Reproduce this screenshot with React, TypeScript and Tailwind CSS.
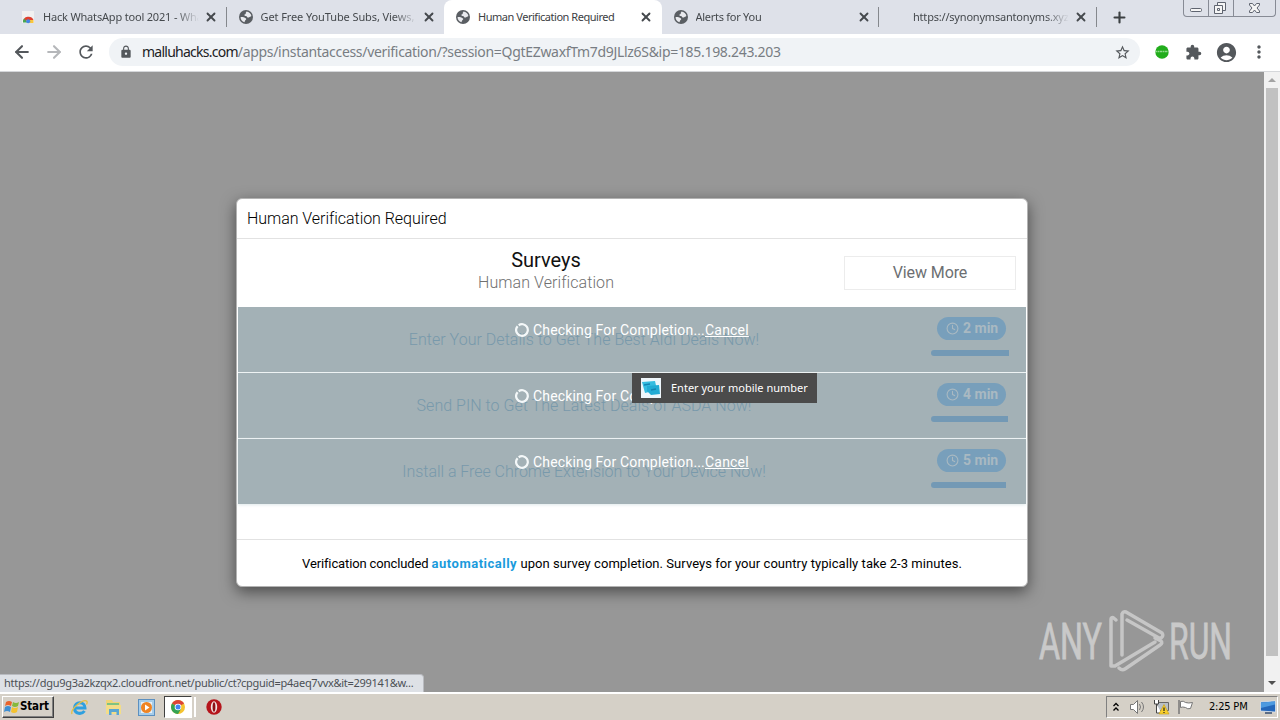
import { ArrowLeft, ArrowRight, Clock, Plus, X } from "lucide-react";
import { MdAccountCircle, MdExtension, MdLock, MdMoreVert, MdRefresh, MdStarBorder } from "react-icons/md";

const tabs = [
  { title: "Hack WhatsApp tool 2021 - Wha", icon: "store", ls: "tracking-[-0.180px]" },
  { title: "Get Free YouTube Subs, Views,", icon: "globe", ls: "tracking-[-0.100px]" },
  { title: "Human Verification Required", icon: "globe", active: true, ls: "tracking-[-0.470px]" },
  { title: "Alerts for You", icon: "globe", ls: "tracking-[-0.270px]" },
  { title: "https://synonymsantonyms.xyz", icon: "none", ls: "tracking-[-0.200px]" },
];

const surveys = [
  { title: "Enter Your Details to Get The Best Aldi Deals Now!", time: "2 min", bar: 78 },
  { title: "Send PIN to Get The Latest Deals of ASDA Now!", time: "4 min", bar: 77 },
  { title: "Install a Free Chrome Extension to Your Device Now!", time: "5 min", bar: 75 },
];

function StoreIcon() {
  return (
    <svg width="14" height="14" viewBox="0 0 14 14">
      <path d="M1 1h12v12H1z" fill="#f1f1f1" />
      <path d="M2 12a5.500 5.500 0 0 1 10.500-2H7z" fill="#e0402f" />
      <path d="M2 12.500a5 5 0 0 1 1-4l4 4z" fill="#45a853" />
      <path d="M7 10h5.500v3H6z" fill="#f9c63d" />
      <circle cx="7.200" cy="11.200" r="2" fill="#4384e8" />
    </svg>
  );
}

function GlobeIcon() {
  return (
    <svg width="14" height="14" viewBox="0 0 14 14">
      <circle cx="7" cy="7" r="7" fill="#5a5e63" />
      <path d="M7.500 1.500c2.500.3 4.500 2 4.900 4.500-.8.8-1.900.6-2.400 1.500-1.500.3-2.500-.5-2.500-1.500C6 6 5 5.500 5.500 4.500c1-.3 1.500-.8 1.200-1.600z" fill="#e9eaee" />
      <path d="M1.600 7c1.500-.3 3.500 0 4.500 1 .8 0 1.400.8 1 1.600-.9.4-1.100 1.300-1.600 2.600C3 11.500 1.400 9.500 1.600 7z" fill="#e9eaee" />
    </svg>
  );
}

function ChromeIcon() {
  return (
    <svg width="14" height="14" viewBox="0 0 14 14">
      <circle cx="7" cy="7" r="7" fill="#f5c330" />
      <path d="M7 7 .94 3.500A7 7 0 0 1 13.060 3.500z" fill="#dc4437" />
      <path d="M7 7 .94 3.500A7 7 0 0 0 7 14l3-5z" fill="#35a353" />
      <circle cx="7" cy="7" r="3.300" fill="#fff" />
      <circle cx="7" cy="7" r="2.500" fill="#4285f4" />
    </svg>
  );
}

function Tab({ tab }: { tab: (typeof tabs)[number] }) {
  return (
    <div className={`flex h-[34px] w-[217.500px] shrink-0 items-center pl-[12px] ${tab.active ? "rounded-t-lg bg-white" : ""}`}>
      <span className="w-[15px]">
        {tab.icon === "store" && <StoreIcon />}
        {tab.icon === "globe" && <GlobeIcon />}
      </span>
      <span
        className={`ml-[7px] w-[156px] overflow-hidden text-[11px] whitespace-nowrap ${tab.ls} ${tab.active ? "text-[#3c4043]" : "text-[#45494d] [mask-image:linear-gradient(to_right,black_85%,transparent)]"}`}
      >
        {tab.title}
      </span>
      <X className="ml-[5px] size-[14px] text-[#45494d]" strokeWidth={3.2} />
    </div>
  );
}

function TabStrip() {
  return (
    <div className="flex h-[34px] items-center bg-[#dee1e9] pl-[9px]">
      <Tab tab={tabs[0]} />
      <div className="-ml-px h-5 w-px bg-[#85888d]" />
      <Tab tab={tabs[1]} />
      <Tab tab={tabs[2]} />
      <Tab tab={tabs[3]} />
      <div className="-ml-px h-5 w-px bg-[#85888d]" />
      <Tab tab={tabs[4]} />
      <div className="-ml-px h-5 w-px bg-[#85888d]" />
      <Plus className="ml-[14px] size-[17px] text-[#3c4043]" strokeWidth={3} />
      <div className="ml-[55px] flex h-[17px] w-[93px] self-start rounded-b border border-t-0 border-[#878b95]">
        <svg width="91" height="16" viewBox="0 0 91 16" fill="none" stroke="#5f6470">
          <path d="M24.500 0v16M49.500 0v16" stroke="#878b95" />
          <rect x="6.500" y="8.500" width="11" height="3" rx="1" fill="#f5f5f5" />
          <path d="M33.500 2.500h8v8h-8z" fill="#f5f5f5" />
          <path d="M30.500 5.500h8v8h-8zM33.500 8.500h2v2h-2z" fill="#f5f5f5" />
          <path d="M65.500 3.500h3l2 2.500 2-2.500h3v1.500l-2.500 3 2.500 3v1.500h-3l-2-2.500-2 2.500h-3v-1.500l2.500-3-2.500-3z" fill="#f5f5f5" />
        </svg>
      </div>
    </div>
  );
}

function Toolbar() {
  return (
    <div className="flex h-[38px] items-center border-b border-[#d5d7da] bg-white pb-px pl-3">
      <ArrowLeft className="size-[20px] text-[#54585c]" strokeWidth={2.5} />
      <ArrowRight className="ml-[12px] size-[20px] text-[#b5b7ba]" strokeWidth={2.5} />
      <MdRefresh className="ml-[12px] size-[20px] text-[#54585c]" />
      <div className="ml-[13px] flex h-7 w-[1031px] items-center rounded-full bg-[#f0f3f6] pl-[10px]">
        <MdLock className="size-[14px] text-[#54585c]" />
        <span className="ml-[9px] pb-px text-[14px] whitespace-nowrap text-[#787d83]">
          <span className="tracking-[-0.750px] text-[#202124]">malluhacks.com</span>
          <span className="tracking-[-0.310px]">/apps/instantaccess/verification/?session=QgtEZwaxfTm7d9JLlz6S&amp;ip=185.198.243.203</span>
        </span>
        <MdStarBorder className="mr-[9px] ml-auto size-[17px] text-[#54585c]" />
      </div>
      <svg className="ml-[15px]" width="14" height="14" viewBox="0 0 14 14">
        <circle cx="7" cy="7" r="6.700" fill="#22ad1c" />
        <path d="M0 6.500h14" stroke="#8fda8b" strokeWidth="1.500" strokeDasharray="2 .5" />
      </svg>
      <MdExtension className="ml-[16px] size-[17px] text-[#54585c]" />
      <MdAccountCircle className="ml-[13px] size-[23px] text-[#54585c]" />
      <MdMoreVert className="ml-[11px] size-[20px] text-[#54585c]" />
    </div>
  );
}

function SurveyRow({ survey, last }: { survey: (typeof surveys)[number]; last: boolean }) {
  return (
    <div className={`relative flex bg-[#a3b1b6] ${last ? "h-[65px] shadow-[0_1px_3px_#dfe8ea]" : "h-[66px] border-b border-[#eef3f4]"}`}>
      <div className={`w-[692px] pt-[22px] text-center text-[16px] leading-[22px] font-light text-[#7899ab] ${last ? "tracking-[-0.040px]" : "tracking-[0.030px]"}`}>
        {survey.title}
      </div>
      <div className="flex w-[84px] flex-col items-start pt-[10px] pl-[1px]">
        <div className="ml-[6px] flex h-[23px] w-[69px] items-center gap-[4px] rounded-full bg-[#789fbb] pl-[9px] text-[14px] font-bold text-[#a9b9c2]">
          <Clock className="size-[13px]" strokeWidth={2} />
          {survey.time}
        </div>
        <div className="mt-[10px] h-[6px] rounded-l-full rounded-r-[2px] bg-[#7399b5]" style={{ width: survey.bar }} />
      </div>
      <div className="absolute inset-x-0 top-[13px] flex h-5 items-center justify-center text-[14px] text-white">
        <svg className="mr-[4px]" width="14" height="14" viewBox="0 0 14 14" fill="none" stroke="#f4f8f9" strokeWidth="2.200">
          <circle cx="7" cy="7" r="5.800" strokeDasharray="34 2.440" transform="rotate(-125 7 7)" />
        </svg>
        <span className="w-[172px] tracking-[0.160px] whitespace-nowrap">Checking For Completion...</span>
        <a className="w-[44px] tracking-[0.200px] underline">Cancel</a>
      </div>
    </div>
  );
}

function Modal() {
  return (
    <div className="mt-[126px] ml-[236px] h-[389px] w-[792px] rounded-[6px] border border-[#b3b3b3] bg-white font-['Roboto',sans-serif] shadow-[0_5px_15px_rgba(0,0,0,0.5)]">
      <div className="flex h-[40px] items-center border-b border-[#e2e2e2] pl-[10px] text-[16px] font-light tracking-[-0.040px] text-black">
        Human Verification Required
      </div>
      <div className="flex h-[68px] items-center pl-[11px]">
        <div className="w-[596px] pb-[4px] text-center">
          <div className="text-[20px] leading-[23px] text-[#111]">Surveys</div>
          <div className="text-[16px] leading-[21px] font-light tracking-[0.080px] text-[#707070]">Human Verification</div>
        </div>
        <button className="h-[34px] w-[172px] border border-[#ececec] text-[16px] tracking-[-0.100px] text-[#6c6f72]">View More</button>
      </div>
      <div className="mx-px">
        {surveys.map((s, i) => (
          <SurveyRow key={s.title} survey={s} last={i === surveys.length - 1} />
        ))}
      </div>
      <div className="mt-[35px] flex h-[47px] items-center justify-center border-t border-[#e2e2e2] pt-[2px] text-[13px] whitespace-pre text-black">
        <span className="tracking-[-0.130px]">Verification concluded </span>
        <b className="tracking-[0.500px] text-[#1a9bdc]">automatically</b>
        <span className="tracking-[0.050px]"> upon survey completion. Surveys for your country typically take 2-3 minutes.</span>
      </div>
    </div>
  );
}

function Watermark() {
  return (
    <svg className="absolute top-[536px] left-[1036px]" width="200" height="66" viewBox="0 0 200 66" fill="none">
      <g fill="#c9c9c9" stroke="#c9c9c9" strokeWidth=".8" fontFamily="Roboto, sans-serif" fontSize="50">
        <text x="3" y="51" textLength="63" lengthAdjust="spacingAndGlyphs">ANY</text>
        <text x="133" y="51" textLength="63" lengthAdjust="spacingAndGlyphs">RUN</text>
      </g>
      <g stroke="#c6c6c6" strokeWidth="3.500" strokeLinejoin="round" strokeLinecap="round">
        <path d="M80 12l-3-2.500q-2 0-2 2V58h4l40-24" />
        <path d="M86 47V6q1-3 4-2l36 21q2 3-1 5l-2 0-32-18" />
        <path d="M119 30l6 3q2 2-1 4L89 61q-3 2-6-1" />
      </g>
    </svg>
  );
}

function Scrollbar() {
  return (
    <div className="ml-auto flex h-full w-[16px] flex-col items-center bg-[#f1f1f1]">
      <div className="flex h-[16px] items-center">
        <svg width="8" height="4" viewBox="0 0 8 4"><path d="M0 4 4 0l4 4z" fill="#a3a3a3" /></svg>
      </div>
      <div className="h-[568px] w-[12px] bg-[#c1c1c1]" />
      <div className="mt-auto flex h-[18px] items-center">
        <svg width="8" height="4" viewBox="0 0 8 4"><path d="M0 0h8L4 4z" fill="#505050" /></svg>
      </div>
    </div>
  );
}

function Taskbar() {
  return (
    <div className="flex h-[28px] items-center border-t-2 border-white bg-[#d5d0c7] pl-[2px]">
      <div className="flex h-[22px] w-[52px] items-center border border-t-white border-r-[#404040] border-b-[#404040] border-l-white pl-px font-bold text-black shadow-[inset_-1px_-1px_#808080]">
        <svg className="shrink-0" width="16" height="16" viewBox="0 0 16 16">
          <path d="M2 3q3-2 6 0l-1 4q-3-2-6 0z" fill="#e9632b" />
          <path d="M9 3q3 2 6 0l-1 4q-3 2-6 0z" fill="#86b93b" />
          <path d="M1 8q3-2 6 0l-1 5q-3-2-6 0z" fill="#3f8fd2" />
          <path d="M8 8q3 2 6 0l-1 5q-3 2-6 0z" fill="#f4c22f" />
        </svg>
        <span className="font-['DejaVu_Sans_Condensed','DejaVu_Sans',sans-serif] text-[11.500px] tracking-[-0.150px]">Start</span>
      </div>
      <svg className="ml-[17px]" width="17" height="17" viewBox="0 0 17 17" fill="none">
        <path d="M4 9h10c0-7-10.500-7-10.500 0 0 6.500 7.500 6.500 10 3" stroke="#2fa0df" strokeWidth="3" />
        <path d="M1 15C-1 10 13-1 16 2.500c.5 1 0 2-.5 3" stroke="#e5bf45" strokeWidth="1.300" />
      </svg>
      <svg className="ml-[17px]" width="17" height="17" viewBox="0 0 17 17">
        <path d="M1 1h6l1 2h7v12H1z" fill="#f0d477" />
        <path d="M2 4h12v3H2z" fill="#7fc381" />
        <path d="M1 6h15v9H1z" fill="#f3dd88" />
        <path d="M4 16v-6h10v6h-2.500v-3h-5v3z" fill="#5aa6d2" />
      </svg>
      <svg className="ml-[16px]" width="17" height="17" viewBox="0 0 17 17">
        <rect x=".5" y=".5" width="16" height="16" fill="#a6cdea" stroke="#5c90c0" />
        <path d="M3 3h11v11H3z" fill="#e6f0f7" />
        <circle cx="8.500" cy="8.500" r="5.500" fill="#ef8423" />
        <path d="M7 5.500v6l4.500-3z" fill="#fff" />
      </svg>
      <div className="ml-[9px] flex h-[22px] w-[28px] items-center justify-center border border-t-[#404040] border-r-white border-b-white border-l-[#404040] bg-white">
        <ChromeIcon />
      </div>
      <div className="ml-[2px] h-[20px] w-[2px] bg-white" />
      <svg className="ml-[10px]" width="16" height="16" viewBox="0 0 16 16">
        <circle cx="8" cy="8" r="7.700" fill="#b5141b" />
        <ellipse cx="8" cy="8" rx="3.200" ry="5.800" fill="#f2e5e5" />
        <ellipse cx="8" cy="8" rx="1.400" ry="4.800" fill="#8c1015" />
      </svg>
      <div className="mr-[2px] ml-auto flex h-[22px] w-[172px] items-center border border-t-[#808080] border-r-white border-b-white border-l-[#808080] pl-[5px]">
        <svg width="8" height="10" viewBox="0 0 8 10" fill="none" stroke="#000" strokeWidth="1.300">
          <path d="M1.500 4 4 1.500 6.500 4M1.500 8.500 4 6l2.500 2.500" />
        </svg>
        <svg className="ml-[9px]" width="17" height="16" viewBox="0 0 17 16" fill="none" stroke="#777">
          <path d="M1.500 5.500h3l4-4v13l-4-4h-3z" fill="#fff" />
          <path d="M10.500 5q2 3 0 6M12.500 3q4 5 0 10" />
        </svg>
        <svg className="ml-[7px]" width="17" height="16" viewBox="0 0 17 16">
          <path d="M4.500 3.500h11v8h-11z" fill="#b8bfc6" stroke="#666" />
          <path d="M1.500 1v4h4V1M3.500 5v9h5" fill="#fff" stroke="#444" />
          <path d="m11 5.500 5 9.500H6z" fill="#f8cf2c" stroke="#c49a10" strokeWidth=".6" />
          <path d="M11 8.500v3.500M11 13v1" stroke="#222" strokeWidth="1.200" />
        </svg>
        <svg className="ml-[7px]" width="17" height="16" viewBox="0 0 17 16">
          <path d="M3.500 2.500q3-1 5 1 3 1 7 0-1 3-2 6-3 1-5-1-3-1-5 0z" fill="#fff" stroke="#777" />
          <path d="M2 1v14" stroke="#777" strokeWidth="1.500" />
        </svg>
        <span className="ml-[15px] w-[42px] font-['DejaVu_Sans_Condensed','DejaVu_Sans',sans-serif] text-[11px] tracking-[-0.200px] whitespace-nowrap text-black">2:25 PM</span>
        <svg className="ml-[9px] shrink-0" width="16" height="15" viewBox="0 0 16 15">
          <path d="M.5 2 15.500 1v11L.5 11z" fill="#2467ba" stroke="#e8eef5" strokeWidth=".7" />
          <path d="M1 2.500 15 1.500v3L1 8z" fill="#4d9ae0" />
          <path d="M5 13h7" stroke="#344e70" strokeWidth="1.500" />
        </svg>
      </div>
    </div>
  );
}

export default function App() {
  return (
    <div className="h-[720px] w-[1280px] overflow-hidden font-['Noto_Sans',sans-serif]">
      <TabStrip />
      <Toolbar />
      <main className="relative flex h-[620px] bg-[#979797]">
        <Modal />
        <Scrollbar />
        <Watermark />
        {/* drag tooltip */}
        <div className="absolute top-[301px] left-[632px] flex h-[30px] w-[185px] items-center bg-[#4b4b4b] pl-[9px] text-[11px] whitespace-nowrap text-white">
          <svg className="mr-[10px]" width="20" height="20" viewBox="0 0 20 20">
            <path d="M0 0h20v20H0z" fill="#eef6fb" />
            <path d="m1 4 13-1 2 9-12 3z" fill="#35bce0" />
            <path d="m6 8 12-1 1 9-9 1-4-4z" fill="#22abd4" />
            <path d="m3 7 6-1M10 12l5-1" stroke="#1484b2" strokeWidth="1.500" />
          </svg>
          <span>Enter your mobile number</span>
        </div>
        {/* link status */}
        <div className="absolute bottom-0 left-0 flex h-[18px] w-[424px] items-center rounded-tr border-t border-r border-[#b9bbc0] bg-[#dee1e6] pl-1 text-[11px] tracking-[-0.280px] whitespace-nowrap text-[#4c5055]">
          https://dgu9g3a2kzqx2.cloudfront.net/public/ct?cpguid=p4aeq7vvx&amp;it=299141&amp;w...
        </div>
      </main>
      <Taskbar />
    </div>
  );
}
